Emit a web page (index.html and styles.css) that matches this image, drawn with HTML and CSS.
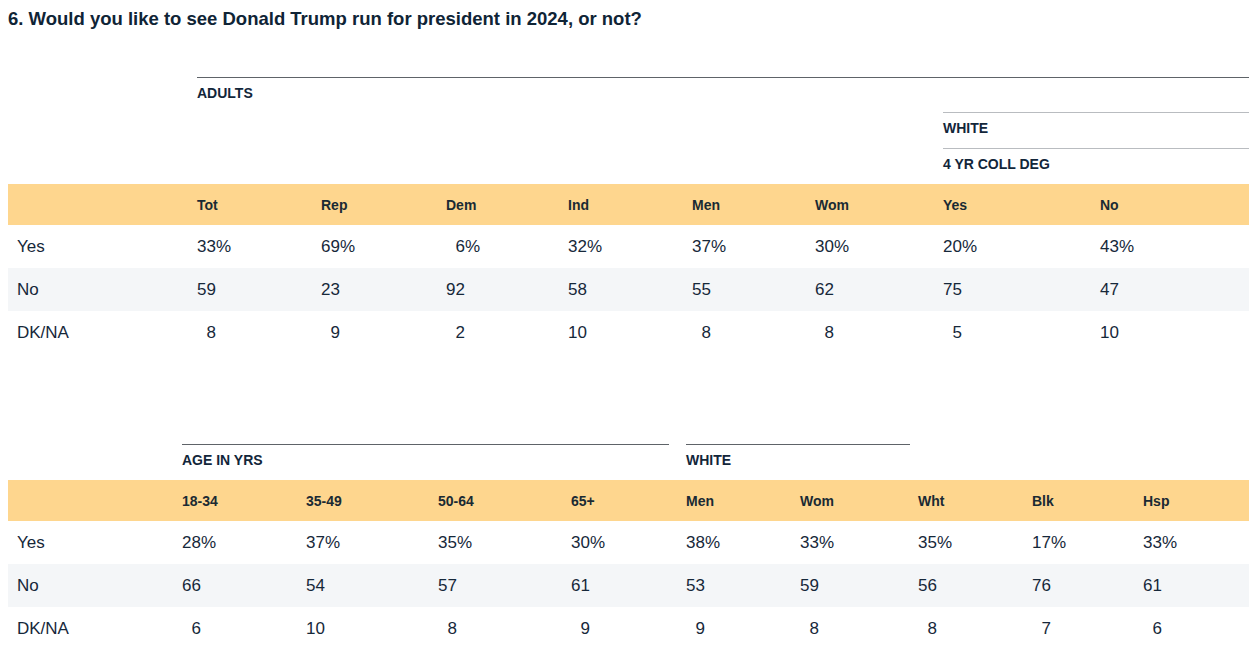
FILE: index.html
```html
<!DOCTYPE html>
<html lang="en">
<head>
<meta charset="utf-8">
<title>Trump 2024</title>
<link rel="stylesheet" href="styles.css">
</head>
<body>
<h1 class="title">6. Would you like to see Donald Trump run for president in 2024, or not?</h1>

<section class="tbl t1">
  <div class="row grp-row r-a">
    <div class="grp span-all">ADULTS</div>
  </div>
  <div class="row grp-row r-b">
    <div class="grp span-last2 light">WHITE</div>
  </div>
  <div class="row grp-row r-c">
    <div class="grp span-last2 light">4 YR COLL DEG</div>
  </div>
  <div class="row hdr">
    <div></div><div>Tot</div><div>Rep</div><div>Dem</div><div>Ind</div><div>Men</div><div>Wom</div><div>Yes</div><div>No</div>
  </div>
  <div class="row body">
    <div>Yes</div><div>33%</div><div>69%</div><div>&#8199;6%</div><div>32%</div><div>37%</div><div>30%</div><div>20%</div><div>43%</div>
  </div>
  <div class="row body alt">
    <div>No</div><div>59</div><div>23</div><div>92</div><div>58</div><div>55</div><div>62</div><div>75</div><div>47</div>
  </div>
  <div class="row body">
    <div>DK/NA</div><div>&#8199;8</div><div>&#8199;9</div><div>&#8199;2</div><div>10</div><div>&#8199;8</div><div>&#8199;8</div><div>&#8199;5</div><div>10</div>
  </div>
</section>

<section class="tbl t2">
  <div class="row grp-row r-d">
    <div class="grp span-age">AGE IN YRS</div>
    <div class="grp span-white">WHITE</div>
  </div>
  <div class="row hdr">
    <div></div><div>18-34</div><div>35-49</div><div>50-64</div><div>65+</div><div>Men</div><div>Wom</div><div>Wht</div><div>Blk</div><div>Hsp</div>
  </div>
  <div class="row body">
    <div>Yes</div><div>28%</div><div>37%</div><div>35%</div><div>30%</div><div>38%</div><div>33%</div><div>35%</div><div>17%</div><div>33%</div>
  </div>
  <div class="row body alt">
    <div>No</div><div>66</div><div>54</div><div>57</div><div>61</div><div>53</div><div>59</div><div>56</div><div>76</div><div>61</div>
  </div>
  <div class="row body">
    <div>DK/NA</div><div>&#8199;6</div><div>10</div><div>&#8199;8</div><div>&#8199;9</div><div>&#8199;9</div><div>&#8199;8</div><div>&#8199;8</div><div>&#8199;7</div><div>&#8199;6</div>
  </div>
</section>
</body>
</html>
```

FILE: styles.css
```css
html, body {
  margin: 0;
  padding: 0;
  background: #ffffff;
}

body {
  padding: 8px 11px 0 8px;
  color: #12263a;
  font-family: "Liberation Sans", Arial, sans-serif;
}

.title {
  margin: 0;
  font-size: 18.5px;
  line-height: 22px;
  font-weight: 700;
  color: #0f2436;
}

.tbl {
  width: 1241px;
}

.t1 {
  margin-top: 47px;
  --cols: 189px 124px 125px 122px 124px 123px 128px 157px 149px;
}

.t2 {
  margin-top: 90px;
  --cols: 174px 124px 132px 133px 115px 114px 118px 114px 111px 106px;
}

.row {
  display: grid;
  grid-template-columns: var(--cols);
}

.grp-row {
  height: 36px;
}

.r-a {
  height: 35px;
}

.grp {
  box-sizing: border-box;
  border-top: 1px solid #5e6368;
  padding-top: 7px;
  font-size: 14px;
  line-height: 17px;
  font-weight: 700;
  color: #12263a;
}

.grp.light {
  border-top-color: #b9bcc0;
}

.span-all {
  grid-column: 2 / -1;
}

.span-last2 {
  grid-column: 8 / -1;
}

.span-age {
  grid-column: 2 / 6;
  margin-right: 17px;
}

.span-white {
  grid-column: 6 / 8;
  margin-right: 8px;
}

.hdr {
  height: 41px;
  align-items: center;
  background: #fed68e;
  font-size: 14px;
  font-weight: 700;
  color: #1a2a33;
}

.body {
  height: 43px;
  align-items: center;
  font-size: 17px;
  color: #16283a;
}

.body > div:first-child {
  padding-left: 9px;
}

.alt {
  background: #f4f6f8;
}
```
